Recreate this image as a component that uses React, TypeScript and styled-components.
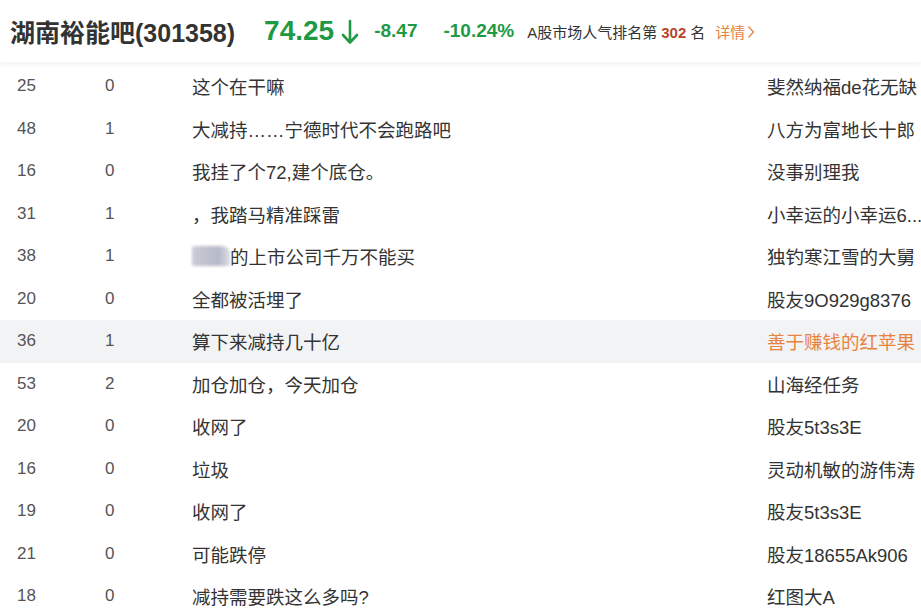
import React from "react";
import styled, { createGlobalStyle } from "styled-components";

const GlobalStyle = createGlobalStyle`
  html, body {
    margin: 0;
    padding: 0;
    background: #ffffff;
  }
  body {
    font-family: "Liberation Sans", Arial, "Noto Sans CJK SC", sans-serif;
    color: #333;
  }
`;

const PALETTE = {
  text: "#333333",
  muted: "#555555",
  green: "#1e9a45",
  orange: "#e8823f",
  red: "#b8452c",
  rowHover: "#f2f3f5",
};

const PageEl = styled.div`
  width: 921px;
  height: 615px;
  overflow: hidden;
  background: #fff;
`;

const HeaderEl = styled.div`
  position: relative;
  z-index: 1;
  height: 62px;
  display: flex;
  align-items: center;
  padding-left: 10px;
  background: #fff;
  box-shadow: 0 2px 5px rgba(0, 0, 0, 0.06);
`;

const TitleEl = styled.h1`
  margin: 0 29px 0 0;
  font-size: 25px;
  font-weight: bold;
  color: ${PALETTE.text};
`;

const PriceEl = styled.span`
  font-size: 28px;
  font-weight: bold;
  color: ${PALETTE.green};
  margin-right: 7px;
`;

const ArrowEl = styled.svg`
  width: 18px;
  height: 26px;
  margin-right: 15px;
  margin-top: 1px;
`;

const ChangeEl = styled.span<{ $gap: number }>`
  font-size: 19px;
  font-weight: bold;
  color: ${PALETTE.green};
  margin-right: ${(p) => p.$gap}px;
`;

const RankEl = styled.span`
  font-size: 15px;
  color: ${PALETTE.text};
  margin-top: 1px;
`;

const RankNumEl = styled.b`
  color: ${PALETTE.red};
  margin: 0 4px;
`;

const DetailEl = styled.a`
  font-size: 15px;
  color: ${PALETTE.orange};
  margin-left: 10px;
  margin-top: 1px;
  display: flex;
  align-items: center;
  gap: 2px;
  text-decoration: none;
`;

const ListEl = styled.div`
  padding-top: 3px;
`;

const RowEl = styled.div<{ $active?: boolean }>`
  display: grid;
  grid-template-columns: 88px 87px 575px 1fr;
  align-items: center;
  height: 42.5px;
  padding-left: 17px;
  font-size: 18.5px;
  background: ${(p) => (p.$active ? PALETTE.rowHover : "transparent")};
  white-space: nowrap;
`;

const NumEl = styled.span`
  font-size: 17px;
  color: ${PALETTE.muted};
`;

const TitleCellEl = styled.span`
  color: ${PALETTE.text};
  display: flex;
  align-items: center;
`;

const AuthorEl = styled.span<{ $hot?: boolean }>`
  color: ${(p) => (p.$hot ? PALETTE.orange : PALETTE.text)};
  overflow: hidden;
`;

const BlurEl = styled.span`
  display: inline-block;
  width: 38px;
  height: 20px;
  background: linear-gradient(90deg, #c9cbd6 0%, #b6b9c9 70%, #dcdde4 100%);
  filter: blur(1.5px);
  border-radius: 3px 8px 2px 2px;
`;

type Post = {
  reads: number;
  replies: number;
  title: string;
  author: string;
  blurred?: boolean;
  active?: boolean;
};

const posts: Post[] = [
  { reads: 25, replies: 0, title: "这个在干嘛", author: "斐然纳福de花无缺" },
  { reads: 48, replies: 1, title: "大减持……宁德时代不会跑路吧", author: "八方为富地长十郎" },
  { reads: 16, replies: 0, title: "我挂了个72,建个底仓。", author: "没事别理我" },
  { reads: 31, replies: 1, title: "，我踏马精准踩雷", author: "小幸运的小幸运6..." },
  { reads: 38, replies: 1, title: "的上市公司千万不能买", author: "独钓寒江雪的大舅", blurred: true },
  { reads: 20, replies: 0, title: "全都被活埋了", author: "股友9O929g8376" },
  { reads: 36, replies: 1, title: "算下来减持几十亿", author: "善于赚钱的红苹果", active: true },
  { reads: 53, replies: 2, title: "加仓加仓，今天加仓", author: "山海经任务" },
  { reads: 20, replies: 0, title: "收网了", author: "股友5t3s3E" },
  { reads: 16, replies: 0, title: "垃圾", author: "灵动机敏的游伟涛" },
  { reads: 19, replies: 0, title: "收网了", author: "股友5t3s3E" },
  { reads: 21, replies: 0, title: "可能跌停", author: "股友18655Ak906" },
  { reads: 18, replies: 0, title: "减持需要跌这么多吗?", author: "红图大A" },
];

export default function App() {
  return (
    <PageEl>
      <GlobalStyle />
      <HeaderEl>
        <TitleEl>湖南裕能吧(301358)</TitleEl>
        <PriceEl>74.25</PriceEl>
        <ArrowEl viewBox="0 0 18 26">
          <path
            d="M9 2 V23 M2 16 L9 23.5 L16 16"
            stroke={PALETTE.green}
            strokeWidth="2.6"
            fill="none"
            strokeLinecap="round"
            strokeLinejoin="round"
          />
        </ArrowEl>
        <ChangeEl $gap={26}>-8.47</ChangeEl>
        <ChangeEl $gap={13}>-10.24%</ChangeEl>
        <RankEl>
          A股市场人气排名第<RankNumEl>302</RankNumEl>名
        </RankEl>
        <DetailEl href="#">
          详情
          <svg width="8" height="14" viewBox="0 0 8 14">
            <path d="M1.5 1.5 L6.5 7 L1.5 12.5" stroke={PALETTE.orange} strokeWidth="1.3" fill="none" />
          </svg>
        </DetailEl>
      </HeaderEl>
      <ListEl>
        {posts.map((p, i) => (
          <RowEl key={i} $active={p.active}>
            <NumEl>{p.reads}</NumEl>
            <NumEl>{p.replies}</NumEl>
            <TitleCellEl>
              {p.blurred && <BlurEl />}
              {p.title}
            </TitleCellEl>
            <AuthorEl $hot={p.active}>{p.author}</AuthorEl>
          </RowEl>
        ))}
      </ListEl>
    </PageEl>
  );
}
